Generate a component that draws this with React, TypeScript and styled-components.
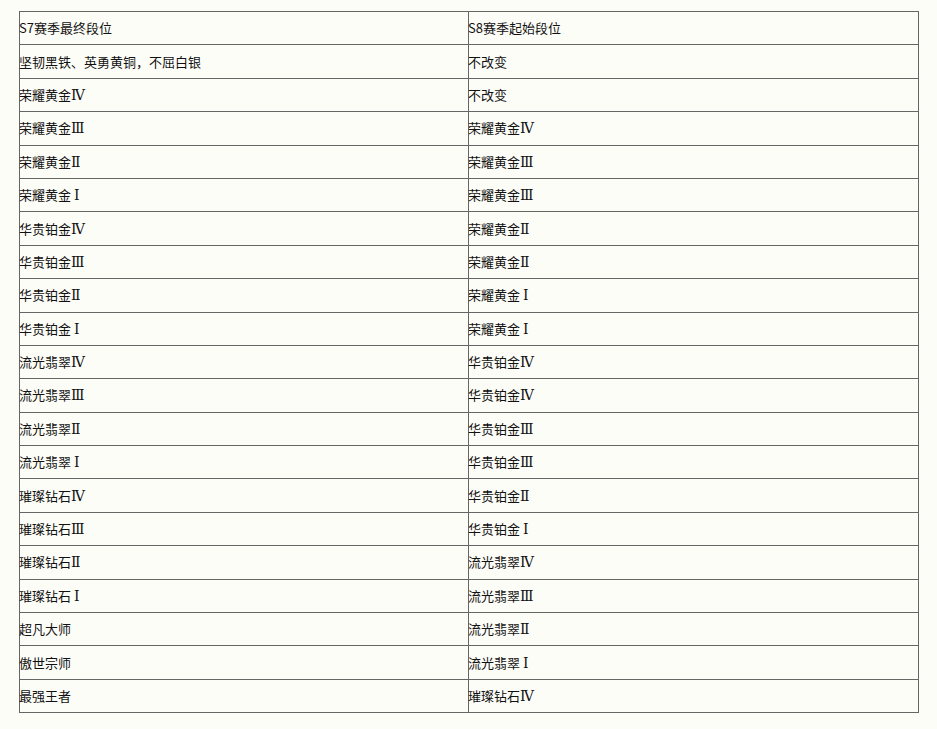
import React from "react";
import styled, { createGlobalStyle } from "styled-components";

const Global = createGlobalStyle`
  html, body { margin: 0; padding: 0; background: #fdfdf8; }
  body { font-family: "Noto Sans CJK SC", "Noto Sans", sans-serif; }
`;

const Page = styled.div`
  padding: 11px 0 0 19px;
`;

const Table = styled.table`
  width: 900px;
  border-collapse: collapse;
  table-layout: fixed;
  font-size: 13px;
  color: #111;
`;

const Row = styled.tr`
  height: 33.4px;
`;

const Cell = styled.td`
  border: 1px solid #666;
  padding: 0;
  vertical-align: middle;
  line-height: 18px;
  white-space: nowrap;
  text-indent: -1px;
`;

const Numeral = styled.span`
  font-family: "DejaVu Serif", "Liberation Serif", serif;
  font-size: 14px;
`;

const rows: [string, string][] = [
  ["S7赛季最终段位", "S8赛季起始段位"],
  ["坚韧黑铁、英勇黄铜，不屈白银", "不改变"],
  ["荣耀黄金Ⅳ", "不改变"],
  ["荣耀黄金Ⅲ", "荣耀黄金Ⅳ"],
  ["荣耀黄金Ⅱ", "荣耀黄金Ⅲ"],
  ["荣耀黄金 Ⅰ", "荣耀黄金Ⅲ"],
  ["华贵铂金Ⅳ", "荣耀黄金Ⅱ"],
  ["华贵铂金Ⅲ", "荣耀黄金Ⅱ"],
  ["华贵铂金Ⅱ", "荣耀黄金 Ⅰ"],
  ["华贵铂金 Ⅰ", "荣耀黄金 Ⅰ"],
  ["流光翡翠Ⅳ", "华贵铂金Ⅳ"],
  ["流光翡翠Ⅲ", "华贵铂金Ⅳ"],
  ["流光翡翠Ⅱ", "华贵铂金Ⅲ"],
  ["流光翡翠 Ⅰ", "华贵铂金Ⅲ"],
  ["璀璨钻石Ⅳ", "华贵铂金Ⅱ"],
  ["璀璨钻石Ⅲ", "华贵铂金 Ⅰ"],
  ["璀璨钻石Ⅱ", "流光翡翠Ⅳ"],
  ["璀璨钻石 Ⅰ", "流光翡翠Ⅲ"],
  ["超凡大师", "流光翡翠Ⅱ"],
  ["傲世宗师", "流光翡翠 Ⅰ"],
  ["最强王者", "璀璨钻石Ⅳ"],
];

function Label({ text }: { text: string }) {
  const parts = text.split(/([ⅠⅡⅢⅣ]+)/);
  return (
    <>
      {parts.map((p, i) =>
        /[ⅠⅡⅢⅣ]/.test(p) ? <Numeral key={i}>{p}</Numeral> : <React.Fragment key={i}>{p}</React.Fragment>
      )}
    </>
  );
}

export default function App() {
  return (
    <>
      <Global />
      <Page>
        <Table>
          <colgroup>
            <col style={{ width: 449 }} />
            <col />
          </colgroup>
          <tbody>
            {rows.map(([a, b], i) => (
              <Row key={i}>
                <Cell>
                  <Label text={a} />
                </Cell>
                <Cell>
                  <Label text={b} />
                </Cell>
              </Row>
            ))}
          </tbody>
        </Table>
      </Page>
    </>
  );
}
